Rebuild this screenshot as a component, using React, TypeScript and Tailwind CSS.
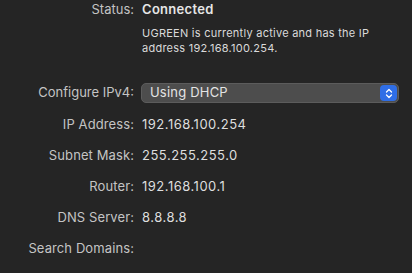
import React from 'react';

const rows: { label: string; value: string }[] = [
  { label: 'IP Address:', value: '192.168.100.254' },
  { label: 'Subnet Mask:', value: '255.255.255.0' },
  { label: 'Router:', value: '192.168.100.1' },
  { label: 'DNS Server:', value: '8.8.8.8' },
  { label: 'Search Domains:', value: '' },
];

const Stepper = () => (
  <div className="flex h-[16px] w-[17px] items-center justify-center rounded-[4px] bg-[#2f6ee6]">
    <svg width="8" height="11" viewBox="0 0 8 11" fill="none">
      <path d="M1.5 4 L4 1.5 L6.5 4" stroke="#fff" strokeWidth="1.3" strokeLinecap="round" strokeLinejoin="round" />
      <path d="M1.5 7 L4 9.5 L6.5 7" stroke="#fff" strokeWidth="1.3" strokeLinecap="round" strokeLinejoin="round" />
    </svg>
  </div>
);

export default function App() {
  return (
    <div
      className="h-[273px] w-[412px] overflow-hidden bg-[#252525] pt-px text-[13px] text-[#dcdcdc]"
      style={{ fontFamily: 'Inter, "Liberation Sans", Arial, sans-serif' }}
    >
      <div className="flex h-[18px] items-center">
        <div className="w-[134px] text-right text-[#c4c4c4]">Status:</div>
        <div className="pl-2 font-semibold tracking-[0.3px] text-[#e6e6e6]">Connected</div>
      </div>
      <div className="mt-[7px] pl-[142px] pr-2 text-[11px] leading-[15px] tracking-[0.25px] text-[#dadada]">
        UGREEN is currently active and has the IP
        <br />
        address 192.168.100.254.
      </div>

      <div className="mt-[27px] flex h-[20px] items-center">
        <div className="w-[134px] text-right text-[#c4c4c4]">Configure IPv4:</div>
        <div className="ml-[7px] flex h-[20px] w-[258px] items-center justify-between rounded-[5px] border border-[#5c5c5c] bg-[#4d4d4d] pl-[8px] pr-[1px] text-[#e4e4e4]">
          <span className="tracking-[0.2px]">Using DHCP</span>
          <Stepper />
        </div>
      </div>

      <div className="mt-[6px]">
        {rows.map((r) => (
          <div key={r.label} className="flex h-[31px] items-center">
            <div className="w-[134px] text-right tracking-[0.1px] text-[#c4c4c4]">{r.label}</div>
            <div className="pl-2 tracking-[0.5px] text-[#dedede]">{r.value}</div>
          </div>
        ))}
      </div>
    </div>
  );
}
